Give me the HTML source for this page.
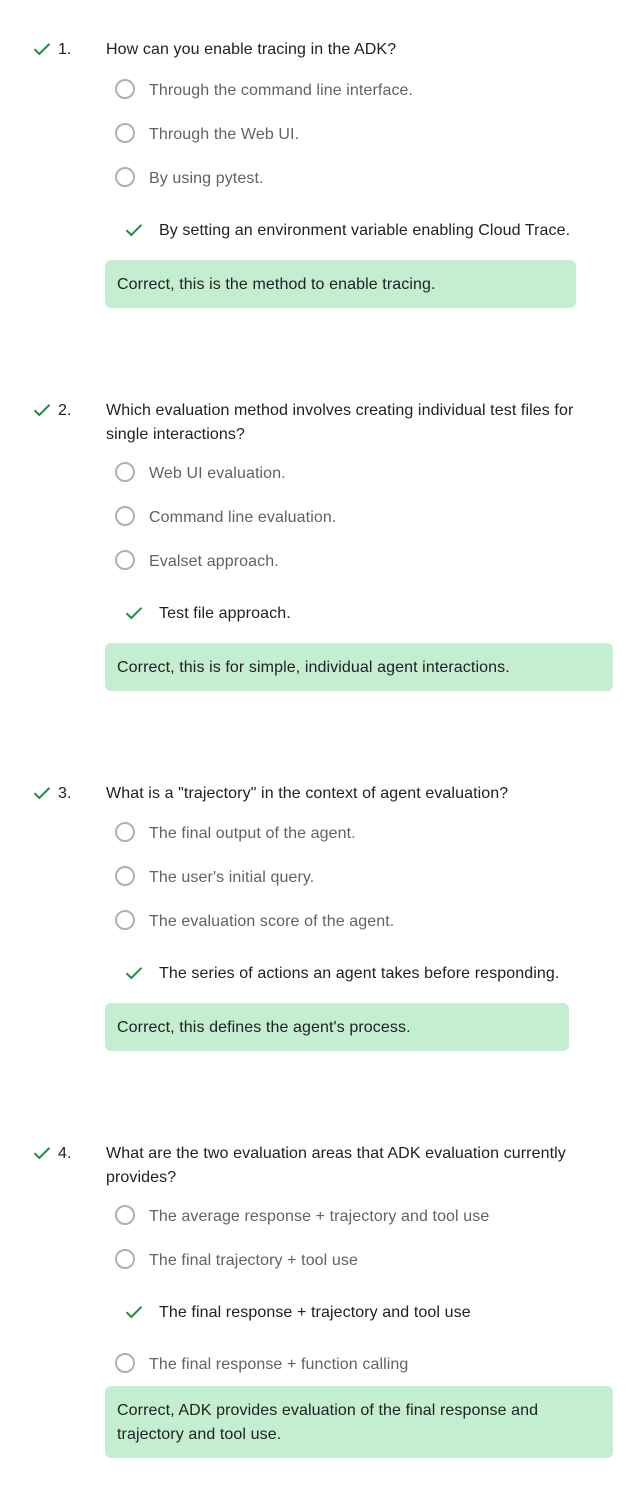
<!DOCTYPE html>
<html><head><meta charset="utf-8">
<style>
body{margin:0;width:641px;height:1489px;background:#fff;position:relative;font-family:"Liberation Sans",sans-serif;font-size:16px;letter-spacing:0.1px;overflow:hidden}
.t{position:absolute;line-height:24px;white-space:nowrap}
.q{color:#202124}
.o{color:#5f6368}
.c{color:#202124}
.r{position:absolute;width:16px;height:16px;border:2px solid #b0b0b0;border-radius:50%;box-sizing:content-box}
.ck{position:absolute}
.box{position:absolute;left:105px;background:#c4eed0;border-radius:6px;color:#202124;padding:13px 12px 11px;box-sizing:border-box;line-height:24px;white-space:nowrap}
</style></head><body>
<svg width="0" height="0" style="position:absolute"><defs><symbol id="k" viewBox="0 0 18 14"><path d="M1.5 7.2 L6.3 12 L16.5 1.8" fill="none" stroke="#1e8e3e" stroke-width="2"/></symbol></defs></svg>

<!-- Q1 -->
<svg class="ck" style="left:33px;top:42px" width="18" height="14"><use href="#k"/></svg>
<div class="t q" style="left:58px;top:38px">1.</div>
<div class="t q" style="left:106px;top:38px">How can you enable tracing in the ADK?</div>
<div class="r" style="left:115px;top:79px"></div><div class="t o" style="left:149px;top:79px">Through the command line interface.</div>
<div class="r" style="left:115px;top:123px"></div><div class="t o" style="left:149px;top:123px">Through the Web UI.</div>
<div class="r" style="left:115px;top:167px"></div><div class="t o" style="left:149px;top:167px">By using pytest.</div>
<svg class="ck" style="left:125px;top:223px" width="18" height="14"><use href="#k"/></svg>
<div class="t c" style="left:159px;top:219px">By setting an environment variable enabling Cloud Trace.</div>
<div class="box" style="top:260px;width:471px;height:48px">Correct, this is the method to enable tracing.</div>

<!-- Q2 -->
<svg class="ck" style="left:33px;top:403px" width="18" height="14"><use href="#k"/></svg>
<div class="t q" style="left:58px;top:399px">2.</div>
<div class="t q" style="left:106px;top:399px">Which evaluation method involves creating individual test files for<br>single interactions?</div>
<div class="r" style="left:115px;top:462px"></div><div class="t o" style="left:149px;top:462px">Web UI evaluation.</div>
<div class="r" style="left:115px;top:506px"></div><div class="t o" style="left:149px;top:506px">Command line evaluation.</div>
<div class="r" style="left:115px;top:550px"></div><div class="t o" style="left:149px;top:550px">Evalset approach.</div>
<svg class="ck" style="left:125px;top:606px" width="18" height="14"><use href="#k"/></svg>
<div class="t c" style="left:159px;top:602px">Test file approach.</div>
<div class="box" style="top:643px;width:508px;height:48px">Correct, this is for simple, individual agent interactions.</div>

<!-- Q3 -->
<svg class="ck" style="left:33px;top:786px" width="18" height="14"><use href="#k"/></svg>
<div class="t q" style="left:58px;top:782px">3.</div>
<div class="t q" style="left:106px;top:782px">What is a "trajectory" in the context of agent evaluation?</div>
<div class="r" style="left:115px;top:822px"></div><div class="t o" style="left:149px;top:822px">The final output of the agent.</div>
<div class="r" style="left:115px;top:866px"></div><div class="t o" style="left:149px;top:866px">The user's initial query.</div>
<div class="r" style="left:115px;top:910px"></div><div class="t o" style="left:149px;top:910px">The evaluation score of the agent.</div>
<svg class="ck" style="left:125px;top:966px" width="18" height="14"><use href="#k"/></svg>
<div class="t c" style="left:159px;top:962px">The series of actions an agent takes before responding.</div>
<div class="box" style="top:1003px;width:464px;height:48px">Correct, this defines the agent's process.</div>

<!-- Q4 -->
<svg class="ck" style="left:33px;top:1146px" width="18" height="14"><use href="#k"/></svg>
<div class="t q" style="left:58px;top:1142px">4.</div>
<div class="t q" style="left:106px;top:1142px">What are the two evaluation areas that ADK evaluation currently<br>provides?</div>
<div class="r" style="left:115px;top:1205px"></div><div class="t o" style="left:149px;top:1205px">The average response + trajectory and tool use</div>
<div class="r" style="left:115px;top:1249px"></div><div class="t o" style="left:149px;top:1249px">The final trajectory + tool use</div>
<svg class="ck" style="left:125px;top:1305px" width="18" height="14"><use href="#k"/></svg>
<div class="t c" style="left:159px;top:1301px">The final response + trajectory and tool use</div>
<div class="r" style="left:115px;top:1353px"></div><div class="t o" style="left:149px;top:1353px">The final response + function calling</div>
<div class="box" style="top:1386px;width:508px;height:72px">Correct, ADK provides evaluation of the final response and<br>trajectory and tool use.</div>
</body></html>
